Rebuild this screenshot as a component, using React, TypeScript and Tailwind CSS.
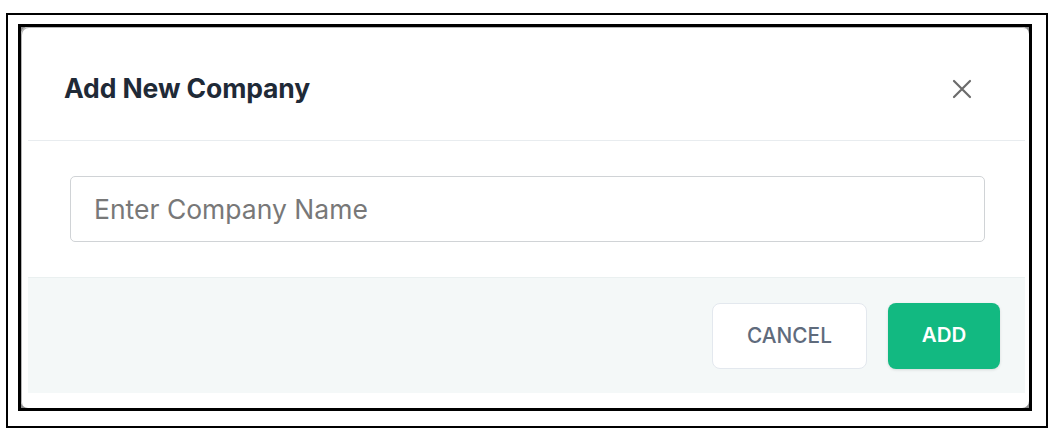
import { useState } from "react";

export default function App() {
  const [name, setName] = useState("");

  return (
    <div className="w-[1060px] h-[436px] bg-white pt-[13px] pl-[6px] font-['Inter',sans-serif]">
      <div className="w-[1042px] h-[415px] border-2 border-black pl-[10px] pt-[9px]">
        {/* screenshot frame around the modal */}
        <div className="w-[1014px] h-[387px] border-[3px] border-black bg-[#8c8c8c]">
          <div className="h-full w-full rounded-[7px] bg-white pl-[7px] pr-[4px] pt-[3px] pb-[15px] shadow-[inset_1px_1px_0_#b5b5b5]">
            <div className="w-[997px] flex flex-col">
              <div className="h-[111px] border-b border-[#e8ecef] flex items-center justify-between pl-[36px] pr-[53px] pt-[8px]">
                <h2 className="text-[26.5px] font-bold text-[#1f2a37] tracking-[-0.1px]">
                  Add New Company
                </h2>
                <button type="button" className="w-[20px] h-[20px] flex items-center justify-center">
                  <svg width="20" height="20" viewBox="0 0 20 20" fill="none">
                    <path
                      d="M2 2 18 18M18 2 2 18"
                      stroke="#6b6b6b"
                      strokeWidth="2.2"
                      strokeLinecap="round"
                    />
                  </svg>
                </button>
              </div>

              <div className="pl-[42px] pr-[40px] py-[35px]">
                <input
                  value={name}
                  onChange={(e) => setName(e.target.value)}
                  placeholder="Enter Company Name"
                  className="w-full h-[66px] rounded-[5px] border border-[#d0d3d6] px-[23px] text-[26.5px] text-[#333] placeholder-[#787878] outline-none"
                />
              </div>

              <div className="h-[116px] bg-[#f4f8f8] border-t border-[#eaf0f0] flex items-center justify-end gap-[21px] pr-[25px]">
                <button
                  type="button"
                  className="w-[155px] h-[66px] rounded-[8px] bg-white border border-[#e3e8ee] text-[20.8px] font-medium text-[#5f6b7c]"
                >
                  CANCEL
                </button>
                <button
                  type="button"
                  className="w-[112px] h-[66px] rounded-[8px] bg-[#12b981] text-[20.5px] font-semibold text-white shadow-[0_1px_3px_rgba(0,0,0,0.12)]"
                >
                  ADD
                </button>
              </div>
            </div>
          </div>
        </div>
      </div>
    </div>
  );
}
